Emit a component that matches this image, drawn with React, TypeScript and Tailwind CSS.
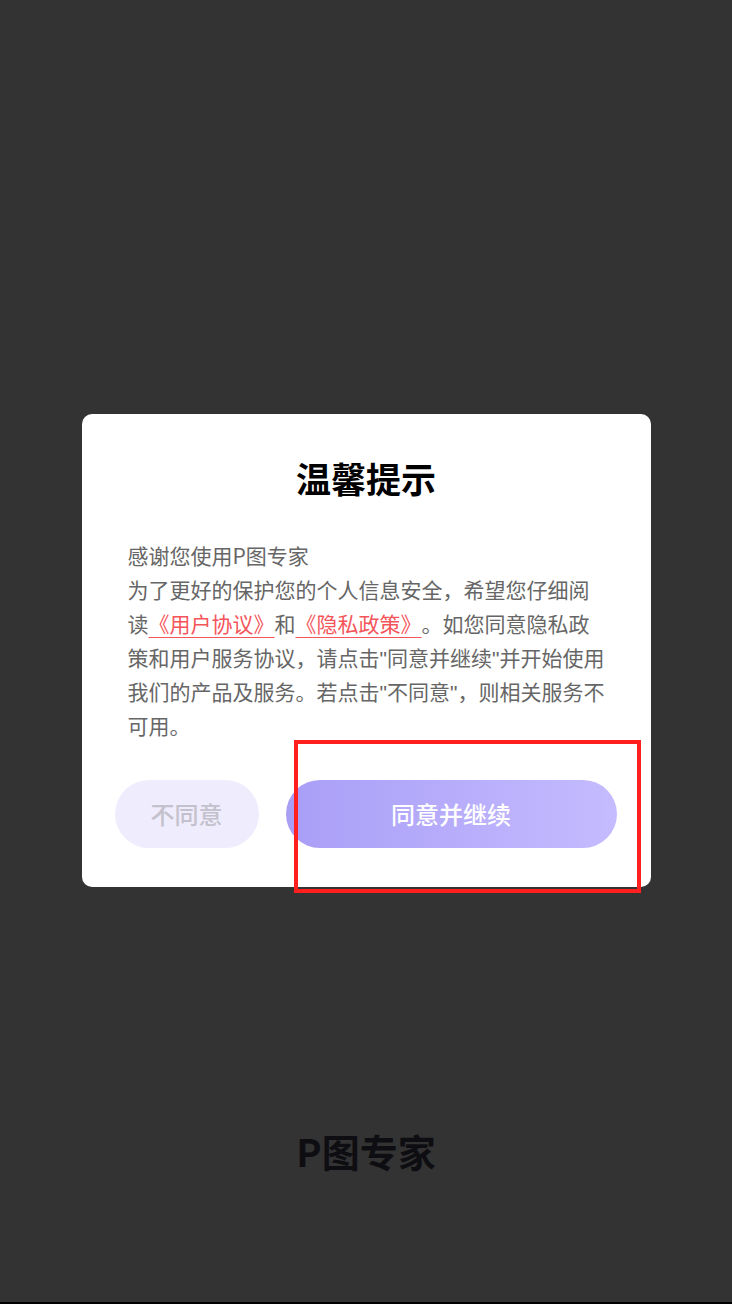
import React from "react"

const cjk = { fontFamily: '"Noto Sans CJK SC", "Noto Sans", sans-serif' }

function Link({ children }: { children: React.ReactNode }) {
  return (
    <a className="text-[#f5545a] underline decoration-[#f5545a] decoration-1 underline-offset-[5px]">
      {children}
    </a>
  )
}

// narrow straight quote, like the one in the reference
const Q = () => <span className="font-['Liberation_Sans'] leading-none">"</span>

export default function App() {
  return (
    <div className="relative w-[732px] h-[1304px] bg-[#333333] flex flex-col" style={cjk}>
      <div className="flex-1 flex flex-col items-center pt-[414px]">
        {/* Dialog */}
        <div className="w-[569px] bg-white rounded-[10px] pt-[40px] pb-[39px] flex flex-col">
          <h2 className="text-center text-[35px] leading-[48px] font-bold text-black">温馨提示</h2>

          <div className="mt-[36px] pl-[46px] pr-[42px] text-[21px] leading-[34px] text-[#666666] [text-spacing-trim:space-all]">
            <p>感谢您使用P图专家</p>
            <p>
              为了更好的保护您的个人信息安全，希望您仔细阅读<Link>《用户协议》</Link>和<Link>《隐私政策》</Link>。如您同意隐私政策和用户服务协议，请点击<Q />同意并继续<Q />并开始使用我们的产品及服务。若点击<Q />不同意<Q />，则相关服务不可用。
            </p>
          </div>

          <div className="mt-[38px] flex gap-[27px] pl-[33px] pr-[34px]">
            <button className="w-[144px] h-[68px] rounded-full bg-[#efecfd] text-[#c3c1cb] text-[24px] font-medium">
              不同意
            </button>
            <button className="flex-1 h-[68px] rounded-full bg-gradient-to-r from-[#a99ef6] to-[#c5bbff] text-white text-[24px] font-medium">
              同意并继续
            </button>
          </div>
        </div>

        <div className="mt-[240px] text-[38px] leading-[48px] font-bold text-[#0e0e12]">P图专家</div>
      </div>
      <div className="h-[2px] bg-black" />

      {/* highlight annotation */}
      <div className="absolute left-[294px] top-[740px] w-[347px] h-[153px] border-4 border-[#ff1f1f]" />
    </div>
  )
}
